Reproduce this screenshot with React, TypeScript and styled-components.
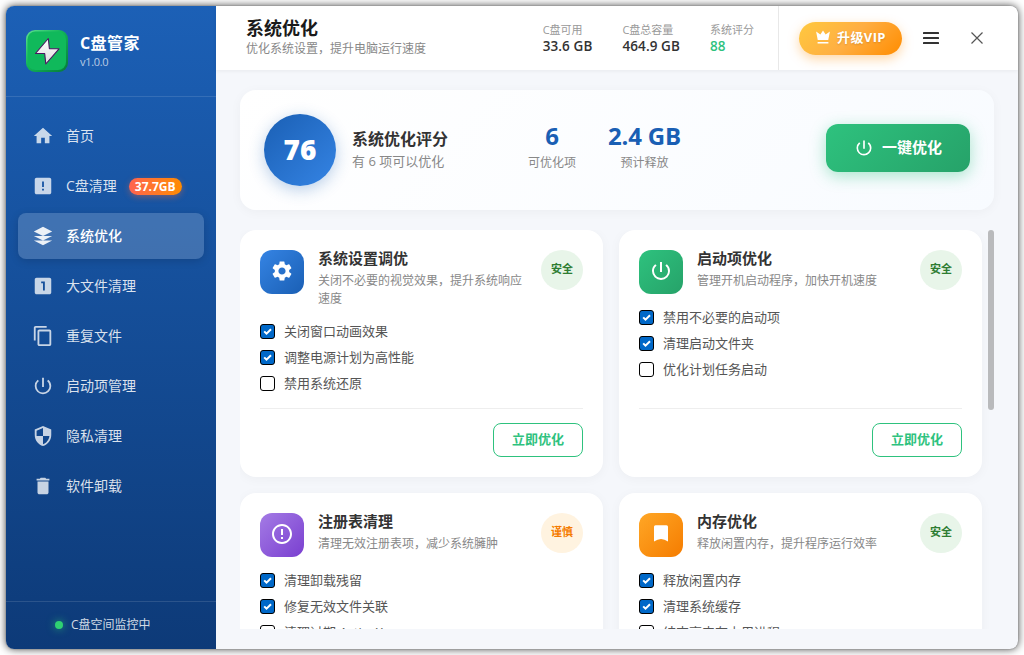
import React from "react";
import styled, { createGlobalStyle, css } from "styled-components";
import {
  MdHome,
  MdLooksOne,
  MdContentCopy,
  MdPowerSettingsNew,
  MdSecurity,
  MdDelete,
  MdSettings,
  MdErrorOutline,
} from "react-icons/md";

const GlobalStyle = createGlobalStyle`
  * { box-sizing: border-box; }
  body {
    margin: 0;
    background: #fff;
    overflow: hidden;
    font-family: "Open Sans", "Noto Sans CJK SC", sans-serif;
    color: #333;
  }
  button { font-family: inherit; cursor: pointer; }
`;

const Screen = styled.div`
  width: 1024px;
  height: 655px;
  padding: 6px;
`;

const Window = styled.div`
  display: flex;
  width: 1012px;
  height: 643px;
  border-radius: 8px;
  overflow: hidden;
  background: #f5f7fb;
  box-shadow: 0 0 1px rgba(0, 0, 0, 0.5), 0 0 8px rgba(0, 0, 0, 0.75);
`;

/* ---------- sidebar ---------- */

const Sidebar = styled.aside`
  display: flex;
  flex-direction: column;
  width: 210px;
  flex: none;
  background: linear-gradient(180deg, #1c60b6 0%, #0d3a78 100%);
  color: #fff;
`;

const Brand = styled.div`
  display: flex;
  align-items: center;
  gap: 12px;
  height: 91px;
  padding: 0 20px;
  border-bottom: 1px solid rgba(255, 255, 255, 0.12);
`;

const BrandText = styled.div`
  display: flex;
  flex-direction: column;
  padding-bottom: 2px;
`;

const BrandName = styled.div`
  font-size: 16px;
  line-height: 22px;
  font-weight: 700;
  letter-spacing: 0.4px;
`;

const BrandVersion = styled.div`
  font-size: 11px;
  line-height: 15px;
  letter-spacing: -0.3px;
  color: rgba(255, 255, 255, 0.7);
`;

const Nav = styled.nav`
  display: flex;
  flex-direction: column;
  gap: 4px;
  flex: 1;
  padding: 16px 12px;
`;

const NavItem = styled.a<{ $active?: boolean }>`
  display: flex;
  align-items: center;
  gap: 12px;
  height: 46px;
  padding: 0 14px;
  border-radius: 8px;
  font-size: 14px;
  line-height: 20px;
  color: rgba(255, 255, 255, 0.85);
  svg { width: 22px; height: 22px; flex: none; opacity: 0.9; }
  ${(p) =>
    p.$active &&
    css`
      background: rgba(255, 255, 255, 0.18);
      color: #fff;
      font-weight: 500;
      box-shadow: 0 2px 8px rgba(0, 0, 0, 0.15);
    `}
`;

const NavBadge = styled.span`
  height: 17px;
  padding: 0 6px;
  border-radius: 9px;
  background: linear-gradient(90deg, #ff6350, #ff8c00);
  box-shadow: 0 2px 6px rgba(255, 107, 53, 0.4);
  color: #fff;
  font-size: 12px;
  line-height: 17px;
  font-weight: 700;
`;

const Status = styled.div`
  display: flex;
  align-items: center;
  gap: 8px;
  height: 48px;
  padding: 0 0 2px 49px;
  border-top: 1px solid rgba(255, 255, 255, 0.12);
  font-size: 12px;
  line-height: 18px;
  color: rgba(255, 255, 255, 0.82);
`;

const StatusDot = styled.span`
  width: 8px;
  height: 8px;
  margin-top: 1px;
  border-radius: 50%;
  background: #2fd072;
  box-shadow: 0 0 8px rgba(47, 208, 114, 0.7);
`;

/* ---------- header ---------- */

const Main = styled.main`
  display: flex;
  flex-direction: column;
  flex: 1;
  min-width: 0;
`;

const Header = styled.header`
  display: flex;
  align-items: center;
  height: 64px;
  flex: none;
  padding-left: 30px;
  background: #fff;
  box-shadow: 0 1px 4px rgba(0, 0, 0, 0.06);
`;

const Heading = styled.div`
  flex: 1;
  padding-bottom: 1px;
`;

const PageTitle = styled.h1`
  margin: 0;
  font-size: 18px;
  line-height: 20px;
  padding-bottom: 2px;
  font-weight: 700;
  color: #1a1a1a;
`;

const PageSubtitle = styled.div`
  font-size: 12px;
  line-height: 17px;
  color: #888;
`;

const Stats = styled.div`
  display: flex;
  gap: 30px;
  height: 64px;
  align-items: center;
  padding-right: 24px;
  border-right: 1px solid #e8e8e8;
`;

const Stat = styled.div``;

const StatLabel = styled.div`
  font-size: 11px;
  line-height: 15px;
  color: #999;
`;

const StatValue = styled.div<{ $good?: boolean }>`
  padding-top: 1px;
  font-size: 13.5px;
  line-height: 17px;
  letter-spacing: 0.1px;
  font-weight: 600;
  color: ${(p) => (p.$good ? "#2ec27e" : "#333")};
`;

const VipButton = styled.button`
  display: flex;
  align-items: center;
  gap: 5px;
  width: 103px;
  height: 33px;
  margin: 0 12px 0 20px;
  padding: 0 15px 3px;
  border: 0;
  border-radius: 17px;
  background: linear-gradient(135deg, #ffc93f 0%, #ffae42 50%, #ff8c00 100%);
  box-shadow: 0 4px 12px rgba(255, 140, 0, 0.35);
  color: #fff;
  font-size: 13px;
  font-weight: 700;
  letter-spacing: 0.4px;
  white-space: nowrap;
  text-shadow: 0 1px 2px rgba(0, 0, 0, 0.15);
  svg { flex: none; }
`;

const WindowButton = styled.button<{ $end?: boolean }>`
  display: flex;
  align-items: center;
  justify-content: center;
  width: 34px;
  height: 34px;
  margin-right: ${(p) => (p.$end ? 24 : 12)}px;
  padding: 0;
  border: 0;
  background: none;
`;

/* ---------- content ---------- */

const Content = styled.div`
  display: flex;
  flex-direction: column;
  gap: 20px;
  flex: 1;
  min-height: 0;
  padding: 20px 24px;
`;

const Hero = styled.section`
  display: flex;
  align-items: center;
  height: 120px;
  flex: none;
  padding: 0 24px;
  border-radius: 16px;
  background: linear-gradient(135deg, #fff 0%, #f8fbff 100%);
  box-shadow: 0 2px 12px rgba(0, 0, 0, 0.04);
`;

const ScoreCircle = styled.div`
  display: flex;
  align-items: center;
  justify-content: center;
  width: 72px;
  height: 72px;
  margin-right: 16px;
  padding-bottom: 2px;
  border-radius: 50%;
  background: linear-gradient(135deg, #1a5fb4, #3584e4);
  box-shadow: 0 4px 16px rgba(26, 95, 180, 0.3);
  color: #fff;
  font-size: 28px;
  line-height: 36px;
  font-weight: 800;
`;

const ScoreInfo = styled.div`
  width: 176px;
`;

const ScoreTitle = styled.div`
  font-size: 16px;
  line-height: 20px;
  padding-bottom: 2px;
  font-weight: 700;
`;

const ScoreNote = styled.div`
  font-size: 13px;
  line-height: 20px;
  color: #888;
`;

const Metrics = styled.div`
  display: flex;
  gap: 32px;
  flex: 1;
  padding-bottom: 7px;
`;

const Metric = styled.div`
  text-align: center;
`;

const MetricValue = styled.div`
  font-size: 24px;
  line-height: 30px;
  padding-bottom: 2px;
  letter-spacing: -0.2px;
  font-weight: 700;
  color: #1a5fb4;
`;

const MetricLabel = styled.div`
  font-size: 12px;
  line-height: 20px;
  color: #888;
`;

const PrimaryButton = styled.button`
  display: flex;
  align-items: center;
  gap: 8px;
  height: 48px;
  margin-bottom: 4px;
  padding: 0 28px;
  border: 0;
  border-radius: 12px;
  background: linear-gradient(135deg, #2ec27e, #26a269);
  box-shadow: 0 4px 16px rgba(46, 194, 126, 0.4);
  color: #fff;
  font-size: 15px;
  font-weight: 700;
  span { padding-bottom: 3px; }
`;

const ScrollArea = styled.div`
  display: flex;
  gap: 6px;
  flex: 1;
  min-height: 0;
  overflow: hidden;
`;

const ScrollThumb = styled.div`
  width: 6px;
  height: 180px;
  border-radius: 3px;
  background: #b9babc;
`;

const CardGrid = styled.div`
  display: grid;
  grid-template-columns: 1fr 1fr;
  grid-auto-rows: 247px;
  gap: 16px;
  flex: 1;
`;

const Card = styled.article`
  display: flex;
  flex-direction: column;
  padding: 20px;
  border-radius: 16px;
  background: #fff;
  box-shadow: 0 2px 12px rgba(0, 0, 0, 0.04);
`;

const CardHead = styled.div`
  display: flex;
  align-items: flex-start;
  gap: 14px;
  min-height: 44px;
  margin-bottom: 14px;
`;

const CardIcon = styled.div<{ $from: string; $to: string }>`
  display: flex;
  align-items: center;
  justify-content: center;
  width: 44px;
  height: 44px;
  flex: none;
  padding-bottom: 2px;
  border-radius: 12px;
  background: linear-gradient(135deg, ${(p) => p.$from}, ${(p) => p.$to});
  color: #fff;
  svg { width: 24px; height: 24px; }
`;

const CardText = styled.div`
  flex: 1;
  min-width: 0;
`;

const CardTitle = styled.h2`
  margin: 0 0 6px;
  font-size: 15px;
  line-height: 16px;
  font-weight: 700;
  color: #333;
`;

const CardDesc = styled.p`
  margin: 0;
  font-size: 12px;
  line-height: 18px;
  color: #888;
`;

const RiskBadge = styled.span<{ $warn?: boolean }>`
  width: 42px;
  height: 40px;
  flex: none;
  border-radius: 50%;
  background: ${(p) => (p.$warn ? "#fff3e0" : "#e8f5e9")};
  color: ${(p) => (p.$warn ? "#f57c00" : "#2e7d32")};
  font-size: 11px;
  line-height: 38px;
  font-weight: 700;
  text-align: center;
`;

const OptionList = styled.div`
  display: flex;
  flex-direction: column;
  gap: 8px;
  flex: 1;
`;

const Option = styled.label`
  display: flex;
  align-items: center;
  gap: 9px;
  height: 18px;
  font-size: 13px;
  line-height: 18px;
  color: #555;
`;

const CheckBox = styled.span<{ $on: boolean }>`
  display: flex;
  width: 15px;
  height: 15px;
  margin-top: 1px;
  border: 1px solid #000;
  border-radius: 3px;
  background: ${(p) => (p.$on ? "#0068c8" : "#fff")};
`;

const CardFoot = styled.div`
  display: flex;
  justify-content: flex-end;
  padding-top: 14px;
  border-top: 1px solid #eee;
`;

const OutlineButton = styled.button`
  width: 90px;
  height: 34px;
  padding: 0 0 3px;
  border: 1px solid #2ec27e;
  border-radius: 8px;
  background: #fff;
  color: #2ec27e;
  font-size: 13px;
  font-weight: 700;
`;

/* ---------- drawings ---------- */

const Logo = () => (
  <svg width="42" height="42" viewBox="0 0 42 42">
    <defs>
      <linearGradient id="edge" x1="0" y1="0" x2="1" y2="1">
        <stop offset="0" stopColor="#5fe092" />
        <stop offset="0.45" stopColor="#12b558" />
        <stop offset="1" stopColor="#067a38" />
      </linearGradient>
      <linearGradient id="bolt" x1="0" y1="0" x2="0" y2="1">
        <stop offset="0" stopColor="#fff" />
        <stop offset="1" stopColor="#dcdcdc" />
      </linearGradient>
    </defs>
    <rect width="42" height="42" rx="9" fill="url(#edge)" />
    <rect x="1.5" y="1.5" width="38.5" height="38.5" rx="8" fill="#10b95b" />
    <path
      d="M22.3 8.5L9.5 23.5h9.2L19.8 34 33 18.8h-9.6z"
      fill="url(#bolt)"
      stroke="#4a1660"
      strokeWidth="1.1"
      strokeLinejoin="round"
    />
  </svg>
);

const AlertSquare = () => (
  <svg viewBox="0 0 24 24" fill="currentColor">
    <path d="M19 3H5c-1.1 0-2 .9-2 2v14c0 1.1.9 2 2 2h14c1.1 0 2-.9 2-2V5c0-1.1-.9-2-2-2zm-6 14h-2v-2h2v2zm0-4h-2V7h2v6z" />
  </svg>
);

const Layers = () => (
  <svg viewBox="0 0 24 24" fill="currentColor">
    <path d="M12 2L2 7l10 5 10-5-10-5zM2 17l10 5 10-5M2 12l10 5 10-5" />
  </svg>
);

const Bookmark = () => (
  <svg viewBox="0 0 24 24" fill="currentColor">
    <path d="M6.5 3.300h11A1.500 1.500 0 0 1 19 4.800v14.800Q12 14.200 5 19.600V4.800A1.500 1.500 0 0 1 6.500 3.300z" />
  </svg>
);

const Crown = () => (
  <svg width="18" height="18" viewBox="0 0 24 24" fill="currentColor">
    <path d="M5 16L2.8 4.5l5.7 4L12 3.2l3.5 5.3 5.7-4L19 16H5zm14.2 2.5v2.2H4.8v-2.2h14.4z" />
  </svg>
);

const MenuBars = () => (
  <svg width="16" height="12" viewBox="0 0 16 12" fill="#333">
    <rect width="16" height="2" rx="0.6" />
    <rect y="5" width="16" height="2" rx="0.6" />
    <rect y="10" width="16" height="2" rx="0.6" />
  </svg>
);

const Cross = () => (
  <svg width="12" height="12" viewBox="0 0 12 12" stroke="#555" strokeWidth="1.2">
    <path d="M0.5 0.5l11 11M11.5 0.5l-11 11" />
  </svg>
);

const Tick = () => (
  <svg width="13" height="13" viewBox="0 0 13 13" fill="none" stroke="#fff" strokeWidth="2">
    <path d="M3.2 6.4l2.3 2.3L10 4.2" />
  </svg>
);

/* ---------- data ---------- */

const navItems = [
  { label: "首页", icon: <MdHome /> },
  { label: "C盘清理", icon: <AlertSquare />, badge: "37.7GB" },
  { label: "系统优化", icon: <Layers />, active: true },
  { label: "大文件清理", icon: <MdLooksOne /> },
  { label: "重复文件", icon: <MdContentCopy /> },
  { label: "启动项管理", icon: <MdPowerSettingsNew /> },
  { label: "隐私清理", icon: <MdSecurity /> },
  { label: "软件卸载", icon: <MdDelete /> },
];

const cards = [
  {
    title: "系统设置调优",
    desc: "关闭不必要的视觉效果，提升系统响应速度",
    icon: <MdSettings />,
    from: "#3584e4",
    to: "#1a5fb4",
    warn: false,
    options: ["关闭窗口动画效果", "调整电源计划为高性能", "禁用系统还原"],
  },
  {
    title: "启动项优化",
    desc: "管理开机启动程序，加快开机速度",
    icon: <MdPowerSettingsNew />,
    from: "#2ec27e",
    to: "#26a269",
    warn: false,
    options: ["禁用不必要的启动项", "清理启动文件夹", "优化计划任务启动"],
  },
  {
    title: "注册表清理",
    desc: "清理无效注册表项，减少系统臃肿",
    icon: <MdErrorOutline />,
    from: "#a47be5",
    to: "#7a3fd0",
    warn: true,
    options: ["清理卸载残留", "修复无效文件关联", "清理过期 ActiveX"],
  },
  {
    title: "内存优化",
    desc: "释放闲置内存，提升程序运行效率",
    icon: <Bookmark />,
    from: "#ffa726",
    to: "#f57c00",
    warn: false,
    options: ["释放闲置内存", "清理系统缓存", "结束高内存占用进程"],
  },
];

export default function App() {
  return (
    <Screen>
      <GlobalStyle />
      <Window>
        <Sidebar>
          <Brand>
            <Logo />
            <BrandText>
              <BrandName>C盘管家</BrandName>
              <BrandVersion>v1.0.0</BrandVersion>
            </BrandText>
          </Brand>
          <Nav>
            {navItems.map((item) => (
              <NavItem key={item.label} $active={item.active}>
                {item.icon}
                <span>{item.label}</span>
                {item.badge && <NavBadge>{item.badge}</NavBadge>}
              </NavItem>
            ))}
          </Nav>
          <Status>
            <StatusDot />
            C盘空间监控中
          </Status>
        </Sidebar>
        <Main>
          <Header>
            <Heading>
              <PageTitle>系统优化</PageTitle>
              <PageSubtitle>优化系统设置，提升电脑运行速度</PageSubtitle>
            </Heading>
            <Stats>
              <Stat>
                <StatLabel>C盘可用</StatLabel>
                <StatValue>33.6 GB</StatValue>
              </Stat>
              <Stat>
                <StatLabel>C盘总容量</StatLabel>
                <StatValue>464.9 GB</StatValue>
              </Stat>
              <Stat>
                <StatLabel>系统评分</StatLabel>
                <StatValue $good>88</StatValue>
              </Stat>
            </Stats>
            <VipButton>
              <Crown />
              升级VIP
            </VipButton>
            <WindowButton>
              <MenuBars />
            </WindowButton>
            <WindowButton $end>
              <Cross />
            </WindowButton>
          </Header>
          <Content>
            <Hero>
              <ScoreCircle>76</ScoreCircle>
              <ScoreInfo>
                <ScoreTitle>系统优化评分</ScoreTitle>
                <ScoreNote>有 6 项可以优化</ScoreNote>
              </ScoreInfo>
              <Metrics>
                <Metric>
                  <MetricValue>6</MetricValue>
                  <MetricLabel>可优化项</MetricLabel>
                </Metric>
                <Metric>
                  <MetricValue>2.4 GB</MetricValue>
                  <MetricLabel>预计释放</MetricLabel>
                </Metric>
              </Metrics>
              <PrimaryButton>
                <MdPowerSettingsNew size={20} />
                <span>一键优化</span>
              </PrimaryButton>
            </Hero>
            <ScrollArea>
              <CardGrid>
                {cards.map((card) => (
                  <Card key={card.title}>
                    <CardHead>
                      <CardIcon $from={card.from} $to={card.to}>
                        {card.icon}
                      </CardIcon>
                      <CardText>
                        <CardTitle>{card.title}</CardTitle>
                        <CardDesc>{card.desc}</CardDesc>
                      </CardText>
                      <RiskBadge $warn={card.warn}>{card.warn ? "谨慎" : "安全"}</RiskBadge>
                    </CardHead>
                    <OptionList>
                      {card.options.map((option, i) => (
                        <Option key={option}>
                          <CheckBox $on={i < 2}>{i < 2 && <Tick />}</CheckBox>
                          {option}
                        </Option>
                      ))}
                    </OptionList>
                    <CardFoot>
                      <OutlineButton>立即优化</OutlineButton>
                    </CardFoot>
                  </Card>
                ))}
              </CardGrid>
              <ScrollThumb />
            </ScrollArea>
          </Content>
        </Main>
      </Window>
    </Screen>
  );
}
